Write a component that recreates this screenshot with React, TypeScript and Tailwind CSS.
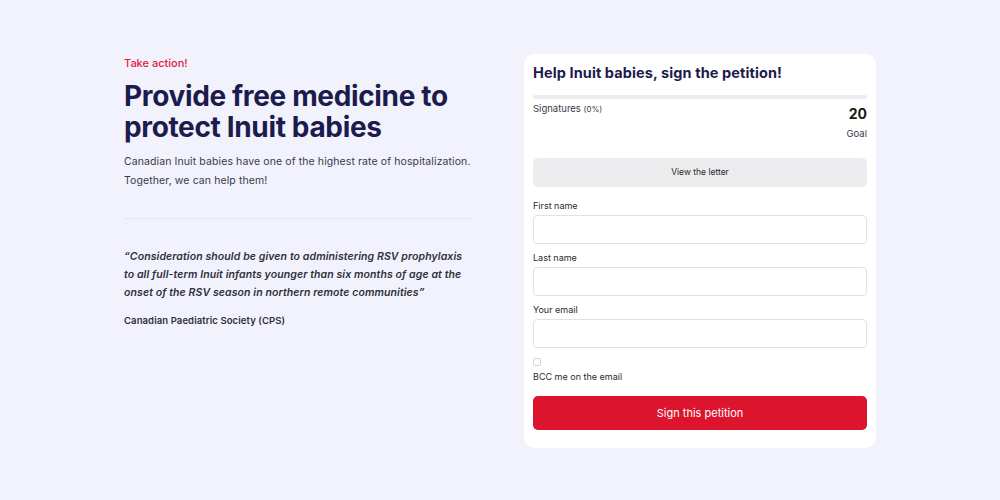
import React, { useState } from 'react';

const font = { fontFamily: 'Inter, "Noto Sans", sans-serif' };

const Field: React.FC<{ label: string; type?: string }> = ({ label, type = 'text' }) => (
    <div className="flex flex-col">
        <label className="text-[9px] text-[#2b2b2b] leading-[12px] mb-[3px]">{label}</label>
        <input
            type={type}
            className="h-[29px] w-full rounded-[4px] border border-[#e2e2e6] bg-white px-2 text-[11px] outline-none"
        />
    </div>
);

export default function App() {
    const [bcc, setBcc] = useState(false);

    return (
        <div style={font} className="w-[1000px] h-[500px] bg-[#f1f2fb] flex justify-between pl-[124px] pr-[124px] pt-[54px]">
            <div className="w-[350px] flex flex-col">
                <p className="text-[11px] font-medium text-[#e5193f] leading-[16px] mt-[1px]">Take action!</p>
                <h1 className="mt-[10px] text-[28px] font-bold leading-[31px] tracking-[-0.35px] text-[#1c1b4d]">
                    Provide free medicine to protect Inuit babies
                </h1>
                <p className="mt-[9px] text-[10.5px] leading-[19px] tracking-[0.1px] text-[#3a3a48]">
                    Canadian Inuit babies have one of the highest rate of hospitalization. Together, we can help them!
                </p>
                <div className="mt-[28px] h-px w-[348px] bg-[#e4e5ef]" />
                <blockquote className="mt-[29px] w-[360px] text-[10.5px] italic font-semibold leading-[18px] tracking-[0.1px] text-[#2f2f3a]">
                    “Consideration should be given to administering RSV prophylaxis
                    <br />
                    to all full-term Inuit infants younger than six months of age at the
                    <br />
                    onset of the RSV season in northern remote communities”
                </blockquote>
                <p className="mt-[12px] text-[9.5px] font-semibold text-[#2f2f3a] leading-[14px] tracking-[0.1px]">Canadian Paediatric Society (CPS)</p>
            </div>

            <div className="w-[352px] h-[394px] bg-white rounded-[10px] px-[9px] pt-[9px] flex flex-col">
                <h2 className="text-[14.5px] font-bold text-[#1c1b4d] leading-[20px] tracking-[0.1px]">Help Inuit babies, sign the petition!</h2>
                <div className="mt-[12px] h-[4px] w-full rounded-full bg-[#ececee]" />
                <div className="mt-[3px] flex justify-between items-start">
                    <p className="text-[9.5px] text-[#3a3a48] leading-[14px]">
                        Signatures <span className="text-[8px]">(0%)</span>
                    </p>
                    <div className="flex flex-col items-end">
                        <span className="mt-[3px] text-[14px] font-bold text-[#1a1a1a] leading-[18px]">20</span>
                        <span className="mt-[4px] text-[9.5px] text-[#3a3a48] leading-[14px]">Goal</span>
                    </div>
                </div>
                <button className="mt-[17px] h-[29px] w-full rounded-[5px] bg-[#ececee] text-[8.5px] text-[#2b2b2b]">
                    View the letter
                </button>
                <div className="mt-[13px] flex flex-col gap-[8px]">
                    <Field label="First name" />
                    <Field label="Last name" />
                    <Field label="Your email" type="email" />
                </div>
                <label className="mt-[10px] flex flex-col items-start gap-[5px] text-[9px] text-[#2b2b2b] leading-[12px]">
                    <input
                        type="checkbox"
                        checked={bcc}
                        onChange={e => setBcc(e.target.checked)}
                        className="h-[8px] w-[8px] appearance-none rounded-[2px] border border-[#d4d4d8] bg-white"
                    />
                    BCC me on the email
                </label>
                <button className="mt-[13px] h-[34px] w-full rounded-[5px] bg-[#dc142e] text-[11px] text-white">
                    Sign this petition
                </button>
            </div>
        </div>
    );
}
